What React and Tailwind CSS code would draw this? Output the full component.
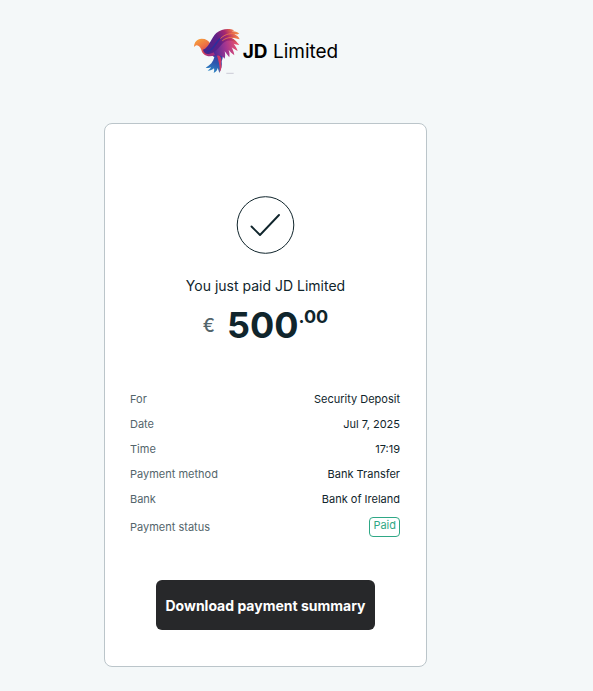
const details = [
  ["For", "Security Deposit"],
  ["Date", "Jul 7, 2025"],
  ["Time", "17:19"],
  ["Payment method", "Bank Transfer"],
  ["Bank", "Bank of Ireland"],
];

function BirdLogo() {
  return (
    <svg viewBox="24 24 144 144" className="size-12 shrink-0" aria-hidden="true">
      <defs>
        <linearGradient id="wingTop" x1="60" y1="95" x2="160" y2="36" gradientUnits="userSpaceOnUse">
          <stop offset="0" stopColor="#46268c" />
          <stop offset="0.45" stopColor="#5f2088" />
          <stop offset="0.7" stopColor="#a8276f" />
          <stop offset="0.85" stopColor="#e0604e" />
          <stop offset="1" stopColor="#f5a04a" />
        </linearGradient>
        <linearGradient id="wingLow" x1="85" y1="90" x2="160" y2="75" gradientUnits="userSpaceOnUse">
          <stop offset="0" stopColor="#4a2a96" />
          <stop offset="0.5" stopColor="#a43591" />
          <stop offset="1" stopColor="#ee5468" />
        </linearGradient>
        <linearGradient id="head" x1="40" y1="56" x2="68" y2="108" gradientUnits="userSpaceOnUse">
          <stop offset="0" stopColor="#f6a13d" />
          <stop offset="0.45" stopColor="#ee7045" />
          <stop offset="0.8" stopColor="#d13c5c" />
          <stop offset="1" stopColor="#a02f80" />
        </linearGradient>
        <linearGradient id="tail" x1="98" y1="100" x2="78" y2="155" gradientUnits="userSpaceOnUse">
          <stop offset="0" stopColor="#3f3a9e" />
          <stop offset="0.5" stopColor="#2c55ae" />
          <stop offset="1" stopColor="#2c86c4" />
        </linearGradient>
      </defs>
      <path fill="url(#tail)" d="M80 106C88 102 94 92 106 88C116 98 115 112 110 124C112 136 109 148 103 159C101 153 100 148 98 144C97 151 93 156 86 159C88 153 88 149 87 145C82 150 76 152 68 152C73 149 76 146 78 142C73 144 68 144 62 143C76 136 85 125 88 112Z" />
      <path fill="#d23a67" d="M94 102C106 105 112 116 108 130C111 139 109 149 104 157C105 139 101 120 94 102Z" />
      <path fill="url(#wingLow)" d="M74 104C86 94 92 74 104 60C122 44 146 52 163 75C156 74 151 73 146 71C152 79 156 85 158 93C150 89 145 86 140 82C144 90 147 97 148 106C140 100 135 94 131 90C134 98 134 105 133 112C127 105 123 98 119 94C121 103 121 109 119 116C112 107 103 104 90 108Z" />
      <path fill="url(#head)" d="M27 81C28 66 35 57 50 56C63 56 72 62 76 71L82 90L90 105C70 114 52 105 49 89C46 80 39 76 34 76C31 77 29 79 27 81Z" />
      <path fill="url(#wingTop)" d="M54 89C72 84 78 54 94 39C112 24 134 25 148 31L140 34C150 33 159 36 163 42L148 43C156 46 162 51 164 58C155 54 147 53 140 54C148 58 154 63 156 69C137 56 120 60 108 76C94 94 78 106 63 101C58 98 55 94 54 89Z" />
      <path fill="none" stroke="#ee7a4c" strokeWidth="2.500" d="M106 56C120 42 138 38 158 42M112 62C126 51 144 50 161 56" />
      <path fill="none" stroke="#2e2f9c" strokeWidth="5" strokeLinecap="round" d="M68 95C84 91 91 70 104 57" />
      <path fill="none" stroke="#b7b4c4" strokeWidth="2" d="M124 160H146" />
    </svg>
  );
}

export default function App() {
  return (
    <div className="min-h-screen bg-[#f4f8f9] pt-7 pr-[62px] pb-6 font-['Inter',sans-serif] text-[#10252c]">
      <header className="flex items-center justify-center gap-[2px] text-black">
        <BirdLogo />
        <span className="text-[19px] leading-6">
          <b className="font-bold">JD</b> Limited
        </span>
      </header>

      <main className="mx-auto mt-[47px] flex w-full max-w-[323px] flex-col items-center rounded-lg border border-[#bbc5ca] bg-white px-[25px] pt-[71px] pb-9">
        <svg viewBox="0 0 60 60" className="size-[60px]" fill="none" stroke="#10252c" aria-hidden="true">
          <circle cx="29.500" cy="30" r="28.3" strokeWidth="1" />
          <path d="M15.500 31.500L24 40L43 20" strokeWidth="1.900" strokeLinecap="round" strokeLinejoin="round" />
        </svg>

        <h1 className="mt-5 text-[14px] leading-[22px]">You just paid JD Limited</h1>
        <p className="mt-2 flex items-start">
          <span className="mr-3 pt-[9px] text-[18px] leading-6 font-medium text-[#53656b]">€</span>
          <span className="text-[36px] leading-10 font-bold">500</span>
          <span className="text-[18px] leading-6 font-bold">.00</span>
        </p>

        <dl className="mt-[47px] flex w-full flex-col gap-[10px] pr-px text-[11px] leading-[15px]">
          {details.map(([label, value]) => (
            <div key={label} className="flex justify-between">
              <dt className="text-[#53656b]">{label}</dt>
              <dd>{value}</dd>
            </div>
          ))}
          <div className="flex items-center justify-between">
            <dt className="text-[#53656b]">Payment status</dt>
            <dd className="rounded border border-[#2fa886] px-[3px] pb-[3px] text-[#2fa886]">Paid</dd>
          </div>
        </dl>

        <button type="button" className="mt-[43px] h-[50px] w-full max-w-[219px] rounded-md bg-[#27282a] text-[14px] font-bold whitespace-nowrap text-white">
          Download payment summary
        </button>
      </main>
    </div>
  );
}
